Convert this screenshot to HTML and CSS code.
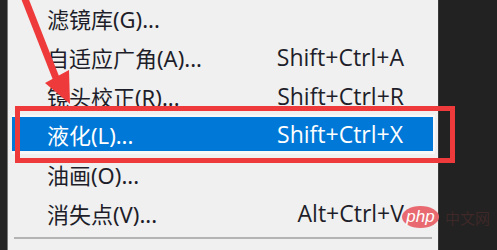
FILE: index.html
```html
<!DOCTYPE html>
<html lang="zh-CN">
<head>
<meta charset="utf-8">
<title>滤镜菜单</title>
<link rel="stylesheet" href="styles.css">
</head>
<body>
<div class="screen">
  <div class="edge-left"></div>
  <div class="menu">
    <ul class="items">
      <li class="item"><span class="label">滤镜库(G)...</span><span class="key"></span></li>
      <li class="item"><span class="label">自适应广角(A)...</span><span class="key">Shift+Ctrl+A</span></li>
      <li class="item"><span class="label">镜头校正(R)...</span><span class="key">Shift+Ctrl+R</span></li>
      <li class="item active"><span class="label">液化(L)...</span><span class="key">Shift+Ctrl+X</span></li>
      <li class="item"><span class="label">油画(O)...</span><span class="key"></span></li>
      <li class="item"><span class="label">消失点(V)...</span><span class="key">Alt+Ctrl+V</span></li>
    </ul>
    <div class="separator"></div>
  </div>
  <div class="edge-right"></div>

  <div class="red-box"></div>
  <svg class="arrow" width="100" height="120" viewBox="0 0 100 120">
    <line x1="23" y1="-6" x2="56" y2="78" stroke="#ee3a3a" stroke-width="7"/>
    <polygon points="70,104 45,83 69,70" fill="#ee3a3a"/>
  </svg>
  <div class="watermark">
    <span class="php">php</span>
    <span class="cn">中文网</span>
  </div>
</div>
</body>
</html>
```

FILE: styles.css
```css
html, body {
  margin: 0;
  padding: 0;
  background: #222222;
}
.screen {
  position: relative;
  width: 497px;
  height: 250px;
  overflow: hidden;
  display: flex;
  font-family: "Noto Sans", "Noto Sans CJK SC", sans-serif;
}
.edge-left {
  width: 7px;
  background: #242424;
  border-right: 1px solid #7a7a7a;
}
.menu {
  width: 430px;
  background: #f0f0f0;
  display: flex;
  flex-direction: column;
}
.edge-right {
  flex: 1;
  background: #222222;
  border-left: 1px solid #3a3a3a;
}
.items {
  list-style: none;
  margin: -2px 0 0 0;
  padding: 0;
}
.item {
  height: 39px;
  display: flex;
  align-items: center;
  justify-content: space-between;
  padding: 0 34px 0 39px;
  font-size: 22px;
  color: #1e1e2a;
  box-sizing: border-box;
}
.item.active {
  background: #0078d7;
  color: #ffffff;
  margin: 0 3px 0 4px;
  padding: 0 30px 0 35px;
  border-top: 2px solid #f8f8f8;
  border-right: 2px solid #f8f8f8;
  border-bottom: 3px solid #f8f8f8;
}
.key {
  font-family: "Open Sans", "Noto Sans", sans-serif;
  font-size: 23px;
}
.separator {
  height: 2px;
  background: #b4b4b4;
  margin: 5px 6px 0 6px;
}
.red-box {
  position: absolute;
  left: 15px;
  top: 106px;
  width: 430px;
  height: 47px;
  border: 5px solid #ee3a3a;
}
.arrow {
  position: absolute;
  left: 0;
  top: 0;
}
.watermark {
  position: absolute;
  left: 402px;
  top: 206px;
  display: flex;
  align-items: center;
  gap: 6px;
}
.php {
  width: 37px;
  height: 22px;
  border-radius: 50%;
  background: #e86a70;
  color: #ffffff;
  font-family: "Liberation Sans", sans-serif;
  font-style: italic;
  font-size: 17px;
  line-height: 21px;
  text-align: center;
}
.cn {
  color: #3e2828;
  font-family: "Noto Sans CJK SC", sans-serif;
  font-size: 15px;
}
```
